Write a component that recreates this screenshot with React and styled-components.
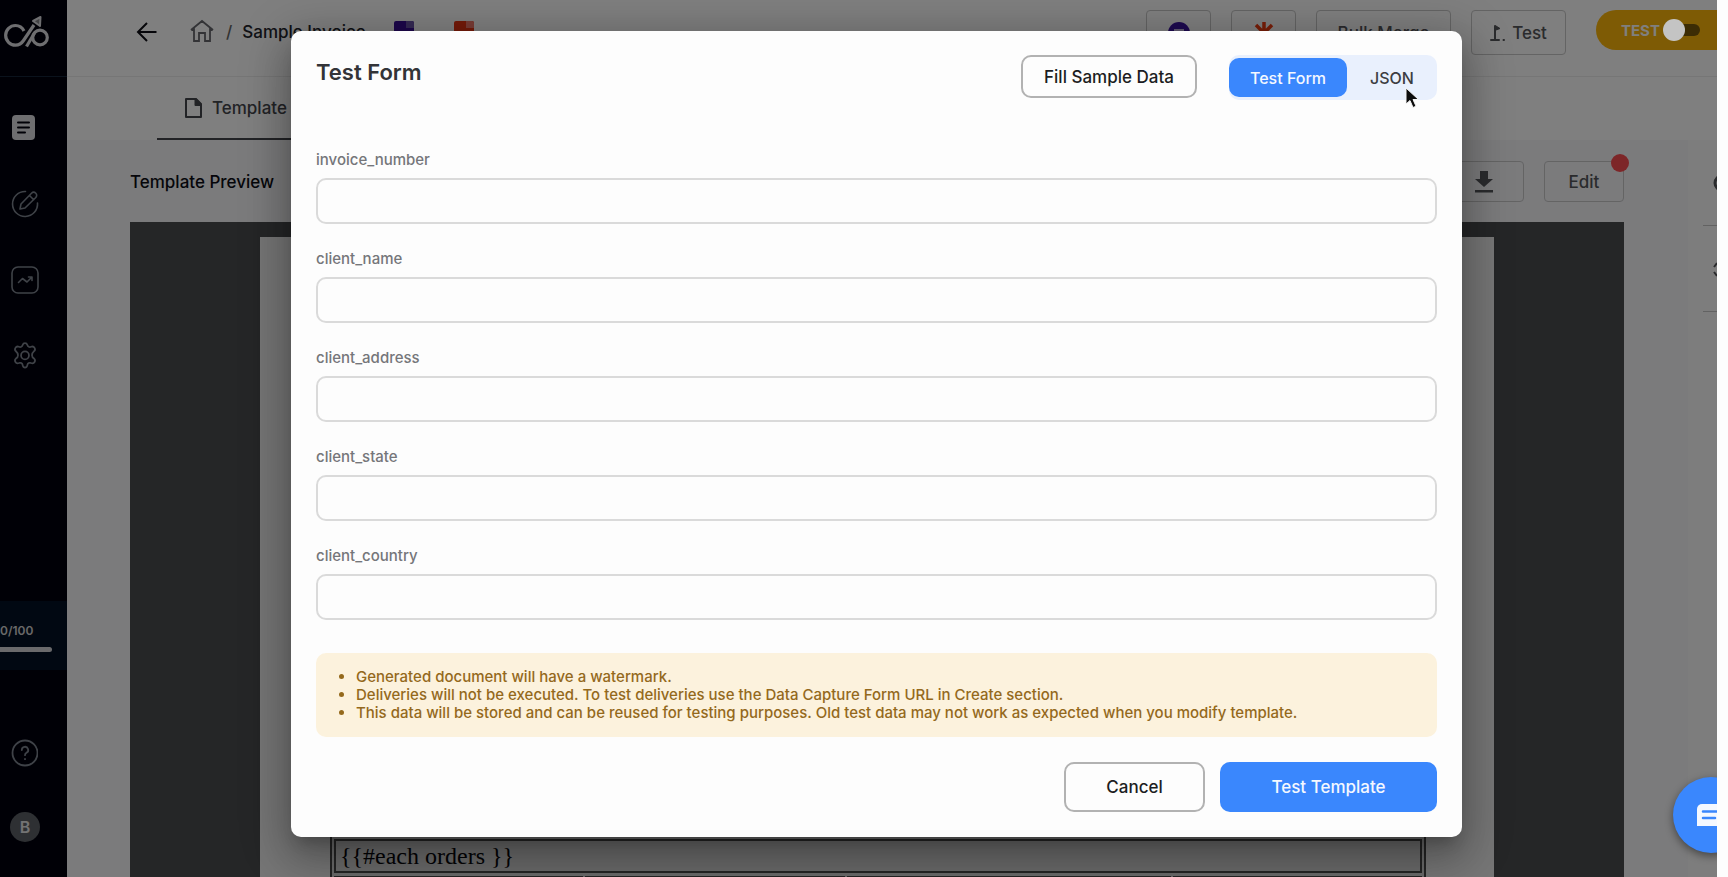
import React, { useState } from "react";
import styled, { createGlobalStyle } from "styled-components";

const Global = createGlobalStyle`
  * { box-sizing: border-box; }
  body { margin: 0; background: #fdfdfd; font-family: Inter, "Liberation Sans", sans-serif; color: #23252c; }
  button, input { font-family: inherit; }
  button { cursor: pointer; }
`;

const Frame = styled.div`
  position: relative;
  display: flex;
  height: 100vh;
  margin-right: 11px;
  overflow: hidden;
  background: #f6f6f9;
`;

/* Sidebar */
const Sidebar = styled.nav`
  display: flex;
  flex-direction: column;
  flex: none;
  width: 67px;
  background: #00000c;
  color: #7e8590;
`;
const LogoBox = styled.div`
  height: 77px;
  padding: 14px 0 0 4px;
  border-bottom: 1px solid #142438;
`;
const NavList = styled.div`
  display: flex;
  flex-direction: column;
  align-items: flex-start;
  gap: 48px;
  padding: 37px 0 0 11px;
`;
const NavButton = styled.button`
  display: flex;
  padding: 0;
  border: 0;
  background: none;
  color: inherit;
`;
const Usage = styled.div`
  height: 69px;
  margin-top: auto;
  padding: 22px 0 0;
  background: #021024;
  color: #d2d2d2;
  font-size: 12px;
  line-height: 16px;
  font-weight: 600;
`;
const UsageBar = styled.div`
  width: 52px;
  height: 5px;
  margin-top: 8px;
  border-radius: 0 3px 3px 0;
  background: #d4d4d8;
`;
const NavFooter = styled.div`
  display: flex;
  flex-direction: column;
  align-items: flex-start;
  gap: 45px;
  padding: 69px 0 35px 10px;
`;
const Avatar = styled.button`
  width: 30px;
  height: 30px;
  padding: 0;
  border: 0;
  border-radius: 50%;
  background: #5c6066;
  color: #e6e6e6;
  font-size: 16px;
  font-weight: 600;
`;

/* Page */
const Page = styled.div`
  display: flex;
  flex-direction: column;
  flex: 1;
  min-width: 0;
`;
const Header = styled.header`
  display: flex;
  align-items: flex-start;
  flex: none;
  height: 77px;
  padding: 10px 0 0 69px;
  border-bottom: 1px solid #ececec;
  background: #fff;
`;
const Crumbs = styled.div`
  display: flex;
  align-items: center;
  height: 44px;
  font-size: 17px;
  font-weight: 500;
`;
const IconLink = styled.a`
  display: flex;
  margin-right: ${(p) => p.$gap}px;
  color: ${(p) => p.$color};
`;
const Slash = styled.span`
  margin-right: 10px;
  color: #666;
`;
const FileMarks = styled.div`
  display: flex;
  gap: 40px;
  margin-left: 28px;
`;
const Actions = styled.div`
  display: flex;
  gap: 20px;
  margin-left: auto;
`;
const OutlineButton = styled.button`
  display: flex;
  align-items: center;
  justify-content: center;
  gap: 6px;
  width: ${(p) => p.$w}px;
  height: ${(p) => p.$h || 45}px;
  padding: 0;
  border: 1px solid #c8c8c8;
  border-radius: 4px;
  background: transparent;
  color: #55565a;
  font-size: 17px;
  font-weight: 500;
`;
const ModePill = styled.label`
  display: flex;
  align-items: center;
  width: 121px;
  height: 40px;
  margin-left: 10px;
  padding-left: 25px;
  border-radius: 20px 0 0 20px;
  background: #fcb60a;
  color: #fff;
  font-size: 15px;
  font-weight: 700;
`;
const Toggle = styled.input`
  appearance: none;
  display: flex;
  align-items: center;
  width: 37px;
  height: 12px;
  margin: 0 0 0 3px;
  border-radius: 6px;
  background: #79580a;
  &::before {
    content: "";
    position: relative;
    z-index: 3;
    flex: none;
    width: 22px;
    height: 22px;
    border-radius: 50%;
    background: #c4c4c4;
  }
`;
const Tabs = styled.div`
  display: flex;
  flex: none;
  height: 63px;
  padding-left: 90px;
  background: #fff;
`;
const Tab = styled.a`
  display: flex;
  align-items: center;
  gap: 10px;
  width: 180px;
  padding: 0 0 0 28px;
  border-bottom: 2px solid #45464c;
  color: #45464c;
  font-size: 17px;
  font-weight: 500;
  text-decoration: none;
`;
const Body = styled.div`
  display: flex;
  flex: 1;
  min-height: 0;
`;
const Preview = styled.section`
  display: flex;
  flex-direction: column;
  flex: 1;
  min-width: 0;
  padding-left: 63px;
`;
const PreviewBar = styled.div`
  display: flex;
  align-items: center;
  flex: none;
  gap: 20px;
  height: 82px;
  padding: 1px 0 0;
`;
const PreviewTitle = styled.h2`
  margin: 0 auto 0 0;
  color: #0c0d14;
  font-size: 17px;
  font-weight: 500;
`;
const EditWrap = styled.div`
  position: relative;
`;
const Dot = styled.span`
  position: absolute;
  top: -7px;
  right: -5px;
  width: 18px;
  height: 18px;
  border-radius: 50%;
  background: #fb4c50;
`;
const Viewer = styled.div`
  display: flex;
  flex: 1;
  min-height: 0;
  padding: 15px 130px 0;
  background: #4b4c4f;
`;
const Sheet = styled.div`
  display: flex;
  flex: 1;
  flex-direction: column;
  justify-content: flex-end;
  padding: 0 68px 0 70px;
  overflow: hidden;
  background: #ededed;
`;
const OrderTable = styled.table`
  width: 100%;
  margin-bottom: -4px;
  border: 2px solid #4a4a4a;
  border-bottom: 0;
  border-spacing: 2px 3px;
  color: #08080c;
  background: #d6d6d6;
  font-family: "Liberation Serif", serif;
  font-size: 24px;
  line-height: 28px;
  td { height: 34px; padding: 0 4px; border: 2px solid #4a4a4a; }
  tr + tr td { height: 1px; padding: 0; border-bottom: 0; line-height: 0; }
`;
const Rail = styled.aside`
  display: flex;
  flex-direction: column;
  align-items: flex-end;
  flex: none;
  width: 93px;
  color: #55565a;
`;
const RailPanel = styled.div`
  width: 29px;
  height: 100%;
  background: #fbfbfb;
`;
const RailItem = styled.div`
  display: flex;
  align-items: center;
  justify-content: flex-end;
  height: 86px;
  margin-left: 15px;
  border-bottom: 1px solid #c4c4c4;
  overflow: hidden;
`;

/* Dialog */
const Overlay = styled.div`
  position: absolute;
  inset: 0;
  z-index: 2;
  padding: 31px 255px 40px 291px;
  background: rgba(0, 0, 0, 0.5);
`;
const Dialog = styled.div`
  display: flex;
  flex-direction: column;
  padding: 24px 25px 25px;
  border-radius: 10px;
  background: #fdfdfd;
  box-shadow: 0 11px 15px -7px rgba(0, 0, 0, 0.2), 0 24px 38px 3px rgba(0, 0, 0, 0.14),
    0 9px 46px 8px rgba(0, 0, 0, 0.22);
`;
const DialogHead = styled.div`
  display: flex;
  align-items: flex-start;
  height: 95px;
`;
const DialogTitle = styled.h1`
  margin: 3px auto 0 0;
  color: #333438;
  font-size: 22px;
  line-height: 28px;
  font-weight: 600;
`;
const Button = styled.button`
  width: ${(p) => p.$w}px;
  height: ${(p) => p.$h}px;
  padding: 0;
  border: ${(p) => (p.$primary ? "0" : "2px solid #b2b2b2")};
  border-radius: 10px;
  background: ${(p) => (p.$primary ? "#3a87fd" : "transparent")};
  color: ${(p) => (p.$primary ? "#f4f8ff" : "#1c1d22")};
  font-size: 17px;
  font-weight: 500;
`;
const Segmented = styled.div`
  display: flex;
  align-items: center;
  width: 208px;
  height: 45px;
  margin-left: 32px;
  border-radius: 10px;
  background: #e9f0fd;
`;
const Segment = styled.button`
  flex: ${(p) => (p.$on ? "0 0 118px" : "1")};
  height: 39px;
  padding: 0;
  border: 0;
  border-radius: 10px;
  background: ${(p) => (p.$on ? "#3a87fd" : "transparent")};
  color: ${(p) => (p.$on ? "#f4f8ff" : "#3c3d42")};
  font-size: 16px;
  font-weight: 500;
`;
const Fields = styled.div`
  display: flex;
  flex-direction: column;
  gap: 25px;
`;
const Field = styled.label`
  display: flex;
  flex-direction: column;
  gap: 8px;
  color: #75767a;
  font-size: 15px;
  line-height: 20px;
  font-weight: 500;
`;
const Input = styled.input`
  height: 46px;
  padding: 0 14px;
  border: 2px solid #dadada;
  border-radius: 10px;
  background: transparent;
  font-size: 16px;
  outline: 0;
`;
const Notice = styled.ul`
  height: 84px;
  margin: 33px 0 25px;
  padding: 15px 0 0 40px;
  border-radius: 10px;
  background: #fcf2dd;
  color: #94691c;
  font-size: 15px;
  line-height: 18px;
  font-weight: 500;
`;
const Footer = styled.div`
  display: flex;
  justify-content: flex-end;
  gap: 15px;
`;
const Pointer = styled.svg`
  position: absolute;
  z-index: 4;
  top: 87px;
  right: 298px;
`;
const Chat = styled.button`
  position: absolute;
  z-index: 4;
  right: -32px;
  bottom: 24px;
  display: flex;
  align-items: center;
  width: 76px;
  height: 76px;
  padding: 0 0 0 24px;
  border: 0;
  border-radius: 50%;
  background: #3a87fd;
  box-shadow: 0 3px 8px rgba(0, 0, 0, 0.45);
`;

const Stroke = ({ size = 28, w = 2, children, vb = 24 }) => (
  <svg width={size} height={size} viewBox={`0 0 ${vb} ${vb}`} fill="none" stroke="currentColor" strokeWidth={w} strokeLinecap="round" strokeLinejoin="round" aria-hidden="true">
    {children}
  </svg>
);

const Logo = () => (
  <svg width="46" height="36" viewBox="4 14 46 36" fill="none" stroke="#dcdce0" strokeWidth="3.2" strokeLinejoin="round" aria-label="Logo">
    <path d="M24 31C22 27 19 25.500 15.500 25.500A9.800 9.800 0 0 0 15.500 45.200C19 45.200 21.500 43.500 23.500 40.500L34 25" />
    <path d="M26.500 46.500L34.500 33" />
    <circle cx="40" cy="37.500" r="7.300" />
    <path d="M33 21L40.500 17L40 26Z" strokeWidth="2" fill="#88888c" />
  </svg>
);

const FileMark = ({ color, fold }) => (
  <svg width="20" height="22" viewBox="0 0 20 22" aria-hidden="true">
    <path d="M2 0h16a2 2 0 0 1 2 2v18a2 2 0 0 1-2 2H2a2 2 0 0 1-2-2V2a2 2 0 0 1 2-2z" fill={color} />
    <path d="M12 0h6a2 2 0 0 1 2 2v5h-8z" fill={fold} />
  </svg>
);

const fields = ["invoice_number", "client_name", "client_address", "client_state", "client_country"];
const notes = [
  "Generated document will have a watermark.",
  "Deliveries will not be executed. To test deliveries use the Data Capture Form URL in Create section.",
  "This data will be stored and can be reused for testing purposes. Old test data may not work as expected when you modify template.",
];

export default function App() {
  const [mode, setMode] = useState("Test Form");
  return (
    <Frame>
      <Global />
      <Sidebar>
        <LogoBox><Logo /></LogoBox>
        <NavList>
          <NavButton aria-label="Templates">
            <svg width="28" height="28" viewBox="0 0 28 28" fill="none" stroke="#00000c" strokeWidth="2" strokeLinecap="round">
              <rect x="1" y="1" width="23" height="25" rx="4" fill="#dcdce0" stroke="none" />
              <path d="M7 8.500h11M7 13.500h11M7 18.500h7" />
            </svg>
          </NavButton>
          <NavButton aria-label="Create">
            <Stroke vb={28} w={1.6}>
              <path d="M14.500 1.500A12.500 12.500 0 1 0 26.500 13" />
              <path d="M9 19l1-5L20.500 3.200a3 3 0 0 1 4.300 4.300L14 18zM18.500 5.500l4.200 4.200" />
            </Stroke>
          </NavButton>
          <NavButton aria-label="Analytics">
            <Stroke vb={28} w={1.6}>
              <rect x="1" y="1" width="26" height="26" rx="6" />
              <path d="M7.500 16.500l4-4 4.500 3.500 4.500-4.500M17.500 11h3.500v3.500" />
            </Stroke>
          </NavButton>
          <NavButton aria-label="Settings">
            <Stroke vb={24} w={1.5}>
              <path d="M10 2.500c.3-1 .9-1.500 2-1.500s1.700.5 2 1.500c.3 1.500 1.800 2.200 3.200 1.600 1.300-.5 2.300-.3 3 .9s.5 2.100-.4 2.900c-2.400 2.100-2.400 4.800 0 6.300.9.800 1.100 1.700.4 2.900s-1.700 1.400-3 .9c-1.400-.6-2.900.2-3.200 1.900-.3 1.200-.9 2-2 2s-1.700-.8-2-2c-.3-1.700-1.800-2.500-3.200-1.900-1.300.5-2.300.3-3-.9s-.5-2.100.4-2.900c2.400-1.500 2.400-4.200 0-6.300-.9-.8-1.100-1.700-.4-2.900s1.700-1.400 3-.9c1.400.6 2.900-.1 3.200-1.600z" />
              <circle cx="12" cy="11.500" r="3.400" />
            </Stroke>
          </NavButton>
        </NavList>
        <Usage>0/100<UsageBar /></Usage>
        <NavFooter>
          <NavButton aria-label="Help">
            <Stroke vb={28} w={1.8}>
              <circle cx="15" cy="14" r="12.500" />
              <path d="M11.800 11a3.200 3.200 0 1 1 4.700 2.800c-1 .6-1.500 1.100-1.500 2.400M15 20v.2" />
            </Stroke>
          </NavButton>
          <Avatar>B</Avatar>
        </NavFooter>
      </Sidebar>
      <Page>
        <Header>
          <Crumbs>
            <IconLink href="#" $gap={32} $color="#0c0d14" aria-label="Back">
              <svg width="22" height="22" viewBox="0 0 22 22" fill="none" stroke="currentColor" strokeWidth="2"><path d="M20.500 11H3M11 2L2 11l9 9" /></svg>
            </IconLink>
            <IconLink href="#" $gap={12} $color="#66676c" aria-label="Home">
              <svg width="24" height="26" viewBox="0 0 24 26" fill="none" stroke="currentColor" strokeWidth="1.800"><path d="M1 11L12 2l11 9M4 9v13h5v-8h6v8h5V9M1.500 11H4M20 11h2.500" /></svg>
            </IconLink>
            <Slash>/</Slash>
            <span>Sample Invoice</span>
            <FileMarks><FileMark color="#3a0f96" fold="#6a55a8" /><FileMark color="#e83412" fold="#f27a6c" /></FileMarks>
          </Crumbs>
          <Actions>
            <OutlineButton $w={65} aria-label="Forms">
              <svg width="24" height="24" viewBox="0 0 24 24"><circle cx="12" cy="12" r="11" fill="#3d14a0" /><path d="M7 8h10v2H7z" fill="#c4b8e4" /></svg>
            </OutlineButton>
            <OutlineButton $w={65} aria-label="Zapier">
              <svg width="24" height="24" viewBox="0 0 24 24" stroke="#f03c10" strokeWidth="3.500"><path d="M12 1v22M2 12h20M4 4l16 16M20 4L4 20" /></svg>
            </OutlineButton>
            <OutlineButton $w={135}>Bulk Merge</OutlineButton>
            <OutlineButton $w={95}>
              <svg width="16" height="18" viewBox="0 0 16 18" fill="none" stroke="currentColor" strokeWidth="2" strokeLinecap="round"><path d="M5 15V2M1 16h8M13.500 16h.5" /><path d="M6 2l4 2.500L6 6z" fill="currentColor" strokeWidth="1" /></svg>
              Test
            </OutlineButton>
            <ModePill>TEST<Toggle type="checkbox" /></ModePill>
          </Actions>
        </Header>
        <Tabs>
          <Tab href="#">
            <svg width="17" height="20" viewBox="0 0 17 20" fill="none" stroke="currentColor" strokeWidth="2" strokeLinejoin="round"><path d="M2 1h9l5 5v13H1V1z" /><path d="M10.500 1v6H16z" fill="currentColor" /></svg>
            Template
          </Tab>
        </Tabs>
        <Body>
          <Preview>
            <PreviewBar>
              <PreviewTitle>Template Preview</PreviewTitle>
              <OutlineButton $w={80} $h={41} aria-label="Download">
                <svg width="20" height="24" viewBox="0 0 20 24" fill="currentColor"><path d="M6 1h8v8h5l-9 8-9-8h5zM1 20h18v2.500H1z" /></svg>
              </OutlineButton>
              <EditWrap><OutlineButton $w={80} $h={41}>Edit</OutlineButton><Dot /></EditWrap>
            </PreviewBar>
            <Viewer>
              <Sheet>
                <OrderTable>
                  <tbody>
                    <tr><td colSpan={4}>{"{{#each orders }}"}</td></tr>
                    <tr><td width="23%" /><td width="24%" /><td width="30%" /><td /></tr>
                  </tbody>
                </OrderTable>
              </Sheet>
            </Viewer>
          </Preview>
          <Rail>
            <RailPanel>
              <RailItem><svg width="4" height="18" viewBox="0 0 4 18" fill="none" stroke="currentColor" strokeWidth="3"><circle cx="9" cy="9" r="7" /></svg></RailItem>
              <RailItem><svg width="4" height="18" viewBox="0 0 4 18" fill="none" stroke="currentColor" strokeWidth="2"><path d="M4 3L1 7M1 12l3 4" /></svg></RailItem>
            </RailPanel>
          </Rail>
        </Body>
      </Page>
      <Overlay>
        <Dialog role="dialog" aria-label="Test Form">
          <DialogHead>
            <DialogTitle>Test Form</DialogTitle>
            <Button $w={176} $h={43}>Fill Sample Data</Button>
            <Segmented>
              {["Test Form", "JSON"].map((m) => (
                <Segment key={m} $on={mode === m} onClick={() => setMode(m)}>{m}</Segment>
              ))}
            </Segmented>
          </DialogHead>
          <Fields>
            {fields.map((f) => (
              <Field key={f}>{f}<Input name={f} /></Field>
            ))}
          </Fields>
          <Notice>{notes.map((n) => <li key={n}>{n}</li>)}</Notice>
          <Footer>
            <Button $w={141} $h={50}>Cancel</Button>
            <Button $w={217} $h={50} $primary>Test Template</Button>
          </Footer>
        </Dialog>
      </Overlay>
      <Pointer width="14" height="22" viewBox="0 0 14 22" aria-hidden="true">
        <path d="M1 1v16l4-3.500 3 7 3-1.300-3-6.700h5.500z" fill="#0c0c0c" stroke="#f4f4f4" strokeWidth="1" />
      </Pointer>
      <Chat aria-label="Open chat">
        <svg width="30" height="22" viewBox="0 0 30 22">
          <path d="M5 0h22a3 3 0 0 1 3 3v19H0V5a5 5 0 0 1 5-5z" fill="#f4f8ff" />
          <path d="M6 7.500h18M6 14h12" stroke="#3a87fd" strokeWidth="2.500" strokeLinecap="round" />
        </svg>
      </Chat>
    </Frame>
  );
}
